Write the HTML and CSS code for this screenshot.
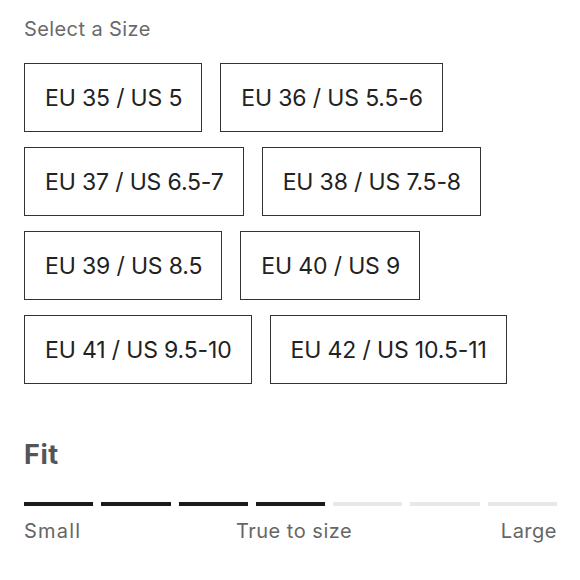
FILE: index.html
```html
<!DOCTYPE html>
<html>
<head>
<meta charset="utf-8">
<link rel="stylesheet" href="styles.css">
</head>
<body>
<div class="page">
  <div class="label">Select a Size</div>
  <div class="sizes">
    <div class="row"><div class="box">EU 35 / US 5</div><div class="box">EU 36 / US 5.5-6</div></div>
    <div class="row"><div class="box">EU 37 / US 6.5-7</div><div class="box">EU 38 / US 7.5-8</div></div>
    <div class="row"><div class="box">EU 39 / US 8.5</div><div class="box">EU 40 / US 9</div></div>
    <div class="row"><div class="box">EU 41 / US 9.5-10</div><div class="box">EU 42 / US 10.5-11</div></div>
  </div>
  <div class="fit-title">Fit</div>
  <div class="bars">
    <span class="bar on"></span><span class="bar on"></span><span class="bar on"></span><span class="bar on"></span><span class="bar"></span><span class="bar"></span><span class="bar"></span>
  </div>
  <div class="scale"><span class="small">Small</span><span class="mid">True to size</span><span>Large</span></div>
</div>
</body>
</html>
```

FILE: styles.css
```css
html, body { margin: 0; padding: 0; background: #fff; }
body { font-family: Inter, "Open Sans", sans-serif; }
.page { padding: 15px 24px 0 24px; width: 533px; }
.label { font-size: 20px; line-height: 28px; color: #6a6a6a; letter-spacing: 0.4px; }
.sizes { margin-top: 20px; display: flex; flex-direction: column; gap: 15px; }
.row { display: flex; gap: 18px; }
.box {
  box-sizing: border-box; height: 69px; border: 1.5px solid #333;
  display: flex; align-items: center; padding: 0 19px 0 20px;
  font-size: 23px; color: #222; letter-spacing: -0.15px; white-space: nowrap;
}
.fit-title { margin-top: 55px; font-size: 27px; font-weight: 700; color: #555; line-height: 32px; letter-spacing: 0.6px; }
.bars { margin-top: 31px; display: flex; gap: 8px; }
.bar { flex: 1; height: 4px; background: #e8e8e8; }
.bar.on { background: #1a1a1a; }
.scale { margin-top: 13px; display: flex; justify-content: space-between; font-size: 20px; color: #666; line-height: 24px; letter-spacing: 0.5px; }
.scale .small { letter-spacing: 1.2px; }
.scale .mid { margin-left: 6px; }
```
